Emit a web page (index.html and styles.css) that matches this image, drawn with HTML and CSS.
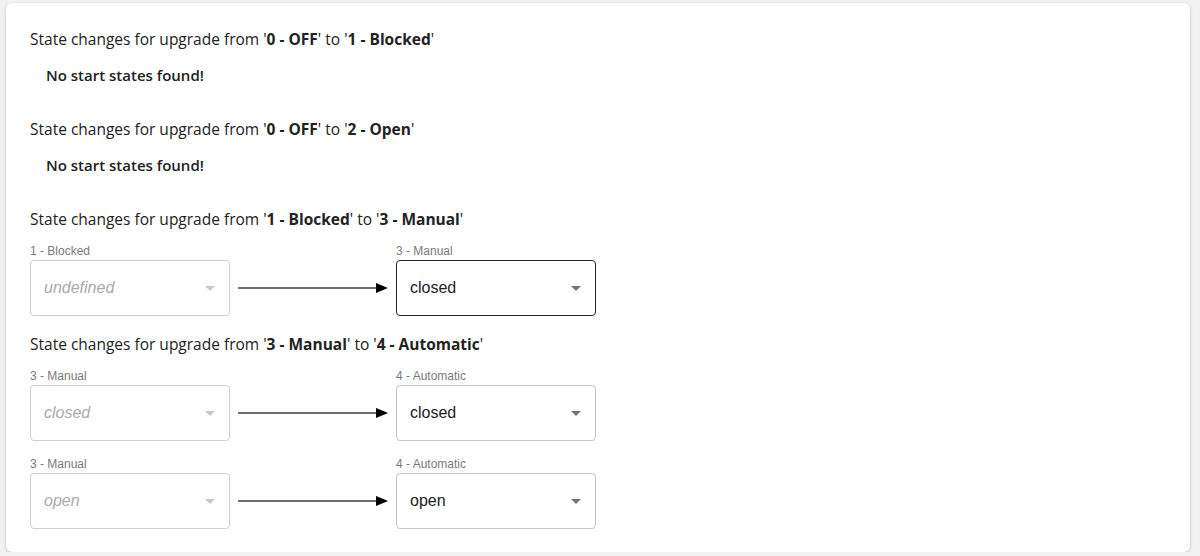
FILE: index.html
```html
<!DOCTYPE html>
<html>
<head>
<meta charset="utf-8">
<link rel="stylesheet" href="styles.css">
</head>
<body>
<div class="card">
  <section class="group">
    <div class="heading">State changes for upgrade from '<b>0 - OFF</b>' to '<b>1 - Blocked</b>'</div>
    <div class="empty">No start states found!</div>
  </section>
  <section class="group">
    <div class="heading">State changes for upgrade from '<b>0 - OFF</b>' to '<b>2 - Open</b>'</div>
    <div class="empty">No start states found!</div>
  </section>
  <section class="group">
    <div class="heading">State changes for upgrade from '<b>1 - Blocked</b>' to '<b>3 - Manual</b>'</div>
    <div class="pair">
      <div class="field">
        <div class="label">1 - Blocked</div>
        <div class="select disabled"><span class="value">undefined</span><span class="caret"></span></div>
      </div>
      <svg class="arrow" width="166" height="56" viewBox="0 0 166 56"><line x1="8" y1="28" x2="148" y2="28" stroke="#6e6e6e" stroke-width="2"/><polygon points="146,23 158,28 146,33" fill="#000"/></svg>
      <div class="field">
        <div class="label">3 - Manual</div>
        <div class="select active"><span class="value">closed</span><span class="caret"></span></div>
      </div>
    </div>
  </section>
  <section class="group">
    <div class="heading">State changes for upgrade from '<b>3 - Manual</b>' to '<b>4 - Automatic</b>'</div>
    <div class="pair">
      <div class="field">
        <div class="label">3 - Manual</div>
        <div class="select disabled"><span class="value">closed</span><span class="caret"></span></div>
      </div>
      <svg class="arrow" width="166" height="56" viewBox="0 0 166 56"><line x1="8" y1="28" x2="148" y2="28" stroke="#6e6e6e" stroke-width="2"/><polygon points="146,23 158,28 146,33" fill="#000"/></svg>
      <div class="field">
        <div class="label">4 - Automatic</div>
        <div class="select"><span class="value">closed</span><span class="caret"></span></div>
      </div>
    </div>
    <div class="pair">
      <div class="field">
        <div class="label">3 - Manual</div>
        <div class="select disabled"><span class="value">open</span><span class="caret"></span></div>
      </div>
      <svg class="arrow" width="166" height="56" viewBox="0 0 166 56"><line x1="8" y1="28" x2="148" y2="28" stroke="#6e6e6e" stroke-width="2"/><polygon points="146,23 158,28 146,33" fill="#000"/></svg>
      <div class="field">
        <div class="label">4 - Automatic</div>
        <div class="select"><span class="value">open</span><span class="caret"></span></div>
      </div>
    </div>
  </section>
</div>
</body>
</html>
```
FILE: styles.css
```css
html, body {
  margin: 0;
  background: #f2f2f2;
}
body {
  padding: 3px 10px 0 6px;
}
.card {
  background: #fff;
  border-radius: 6px;
  box-shadow: 0 1px 3px rgba(0,0,0,0.25);
  padding: 26px 24px 23px 24px;
  height: 549px;
  box-sizing: border-box;
  font-family: "Open Sans", "Noto Sans", sans-serif;
  color: #222;
}
.group + .group {
  margin-top: 34px;
}
.group:nth-child(4) {
  margin-top: 18px;
}
.heading {
  font-size: 15.5px;
  line-height: 20px;
}
.heading b {
  font-weight: 700;
}
.empty {
  margin-top: 16px;
  padding-left: 16px;
  font-size: 15px;
  font-weight: 600;
  line-height: 20px;
}
.pair {
  display: flex;
  align-items: flex-end;
  margin-top: 16px;
}
.heading + .pair {
  margin-top: 15px;
}
.field {
  width: 200px;
}
.label {
  font-family: "Liberation Sans", Arial, sans-serif;
  font-size: 12px;
  line-height: 14px;
  color: #7a7a7a;
  margin-bottom: 2px;
}
.select {
  height: 56px;
  box-sizing: border-box;
  border: 1px solid #c4c4c4;
  border-radius: 4px;
  display: flex;
  align-items: center;
  padding: 0 14px 0 13px;
  font-family: "Liberation Sans", Arial, sans-serif;
  font-size: 16px;
  color: #222;
}
.select.active {
  border-color: #222;
}
.select.disabled {
  border-color: #cfcfcf;
  color: #aaa;
  font-style: italic;
}
.value {
  flex: 1;
}
.caret {
  width: 0;
  height: 0;
  border-left: 5px solid transparent;
  border-right: 5px solid transparent;
  border-top: 5px solid #757575;
}
.select.disabled .caret {
  border-top-color: #c8c8c8;
}
.arrow {
  display: block;
  flex: none;
}
```
